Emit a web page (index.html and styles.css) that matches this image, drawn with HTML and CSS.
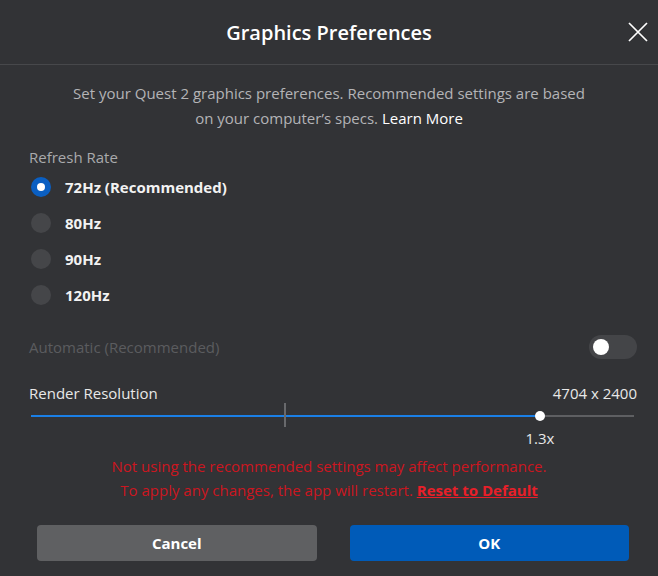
FILE: index.html
```html
<!DOCTYPE html>
<html>
<head>
<meta charset="utf-8">
<link rel="stylesheet" href="styles.css">
</head>
<body>
<div class="dialog">
  <header class="header">
    <span></span>
    <h1 class="title">Graphics Preferences</h1>
    <button class="close" aria-label="Close">
      <svg width="20" height="20" viewBox="0 0 20 20"><path d="M1 1 L19 19 M19 1 L1 19" stroke="#fff" stroke-width="1.7" fill="none"/></svg>
    </button>
  </header>
  <p class="desc">Set your Quest 2 graphics preferences. Recommended settings are based<br>on your computer’s specs. <a class="learn">Learn More</a></p>
  <div class="section">
    <div class="label">Refresh Rate</div>
    <div class="radios">
      <div class="radio-row"><span class="radio checked"></span><span class="radio-text">72Hz (Recommended)</span></div>
      <div class="radio-row"><span class="radio"></span><span class="radio-text">80Hz</span></div>
      <div class="radio-row"><span class="radio"></span><span class="radio-text">90Hz</span></div>
      <div class="radio-row"><span class="radio"></span><span class="radio-text">120Hz</span></div>
    </div>
    <div class="auto-row">
      <span class="auto-text">Automatic (Recommended)</span>
      <span class="toggle"><span class="knob"></span></span>
    </div>
    <div class="res-row">
      <span class="res-label">Render Resolution</span>
      <span class="res-value">4704 x 2400</span>
    </div>
    <div class="slider">
      <div class="track">
        <div class="fill" style="width:84.4%"></div>
        <div class="tick" style="left:42.1%"></div>
        <div class="thumb" style="left:84.4%"></div>
      </div>
    </div>
    <div class="scale-row">
      <span class="scale" style="left:84.4%">1.3x</span>
    </div>
  </div>
  <p class="warn">Not using the recommended settings may affect performance.<br>To apply any changes, the app will restart. <a class="reset">Reset to Default</a></p>
  <footer class="footer">
    <button class="btn cancel">Cancel</button>
    <button class="btn ok">OK</button>
  </footer>
</div>
</body>
</html>
```

FILE: styles.css
```css
* { box-sizing: border-box; }
html, body { margin: 0; padding: 0; }
body {
  background: #323336;
  font-family: "Open Sans", "Noto Sans", sans-serif;
  color: #fff;
  width: 658px;
  height: 576px;
  overflow: hidden;
}
.dialog { display: flex; flex-direction: column; height: 576px; }
.header {
  height: 65px;
  border-bottom: 1px solid #47484b;
  display: grid;
  grid-template-columns: 1fr auto 1fr;
  align-items: center;
}
.title {
  margin: 0;
  font-size: 20px;
  font-weight: 600;
  color: #fff;
  line-height: 26px;
  padding-top: 1px;
}
.close {
  justify-self: end;
  margin-right: 10px;
  background: none;
  border: 0;
  padding: 0;
  width: 20px;
  height: 20px;
  display: flex;
}
.desc {
  margin: 16px 0 0;
  text-align: center;
  font-size: 15px;
  line-height: 25px;
  color: #b4b4b6;
}
.learn { color: #fff; }
.section { padding: 0 21px 0 29px; margin-top: 16px; }
.label { font-size: 15px; line-height: 20px; color: #a9aaac; }
.radios { margin-top: 2px; display: flex; flex-direction: column; }
.radio-row { height: 36px; display: flex; align-items: center; gap: 14px; padding-left: 2px; }
.radio {
  width: 20px; height: 20px; border-radius: 50%;
  background: #454649;
  display: flex; align-items: center; justify-content: center;
}
.radio.checked { background: #0a5fc2; }
.radio.checked::after {
  content: ""; width: 8px; height: 8px; border-radius: 50%; background: #fff;
}
.radio-text { font-size: 15px; font-weight: 700; color: #f2f2f2; }
.auto-row {
  margin-top: 22px;
  height: 24px;
  display: flex; align-items: center; justify-content: space-between;
}
.auto-text { font-size: 15px; color: #5b5c5f; }
.toggle {
  width: 48px; height: 24px; border-radius: 12px; background: #444548;
  display: flex; align-items: center; padding-left: 4px;
}
.knob { width: 16px; height: 16px; border-radius: 50%; background: #fff; }
.res-row {
  margin-top: 24px;
  height: 20px;
  display: flex; align-items: center; justify-content: space-between;
  font-size: 15px; color: #e8e8e8;
}
.slider { height: 24px; padding: 0 3px 0 2px; display: flex; align-items: center; margin-top: 1px; }
.track { position: relative; flex: 1; height: 2px; background: #5e5f62; }
.fill { height: 2px; background: #1a7fe6; }
.tick { position: absolute; top: -12px; width: 2px; height: 24px; margin-left: -1px; background: #68696c; }
.thumb { position: absolute; top: -4px; width: 10px; height: 10px; margin-left: -5px; border-radius: 50%; background: #fff; }
.scale-row { position: relative; height: 20px; margin: 0 3px 0 2px; }
.scale { position: absolute; transform: translateX(-50%); font-size: 15px; line-height: 20px; color: #e8e8e8; }
.warn {
  margin: 6px 0 0;
  text-align: center;
  font-size: 15px;
  line-height: 24px;
  color: #cc1620;
}
.reset { color: #e81f29; font-weight: 700; text-decoration: underline; }
.footer {
  margin-top: 23px;
  display: flex; gap: 33px;
  padding: 0 29px 0 37px;
}
.btn {
  flex: 1; height: 36px; border: 0; border-radius: 4px;
  font-family: inherit; font-size: 15px; font-weight: 700; color: #fff;
}
.cancel { background: #5f6062; }
.ok { background: #005bb8; }
```
